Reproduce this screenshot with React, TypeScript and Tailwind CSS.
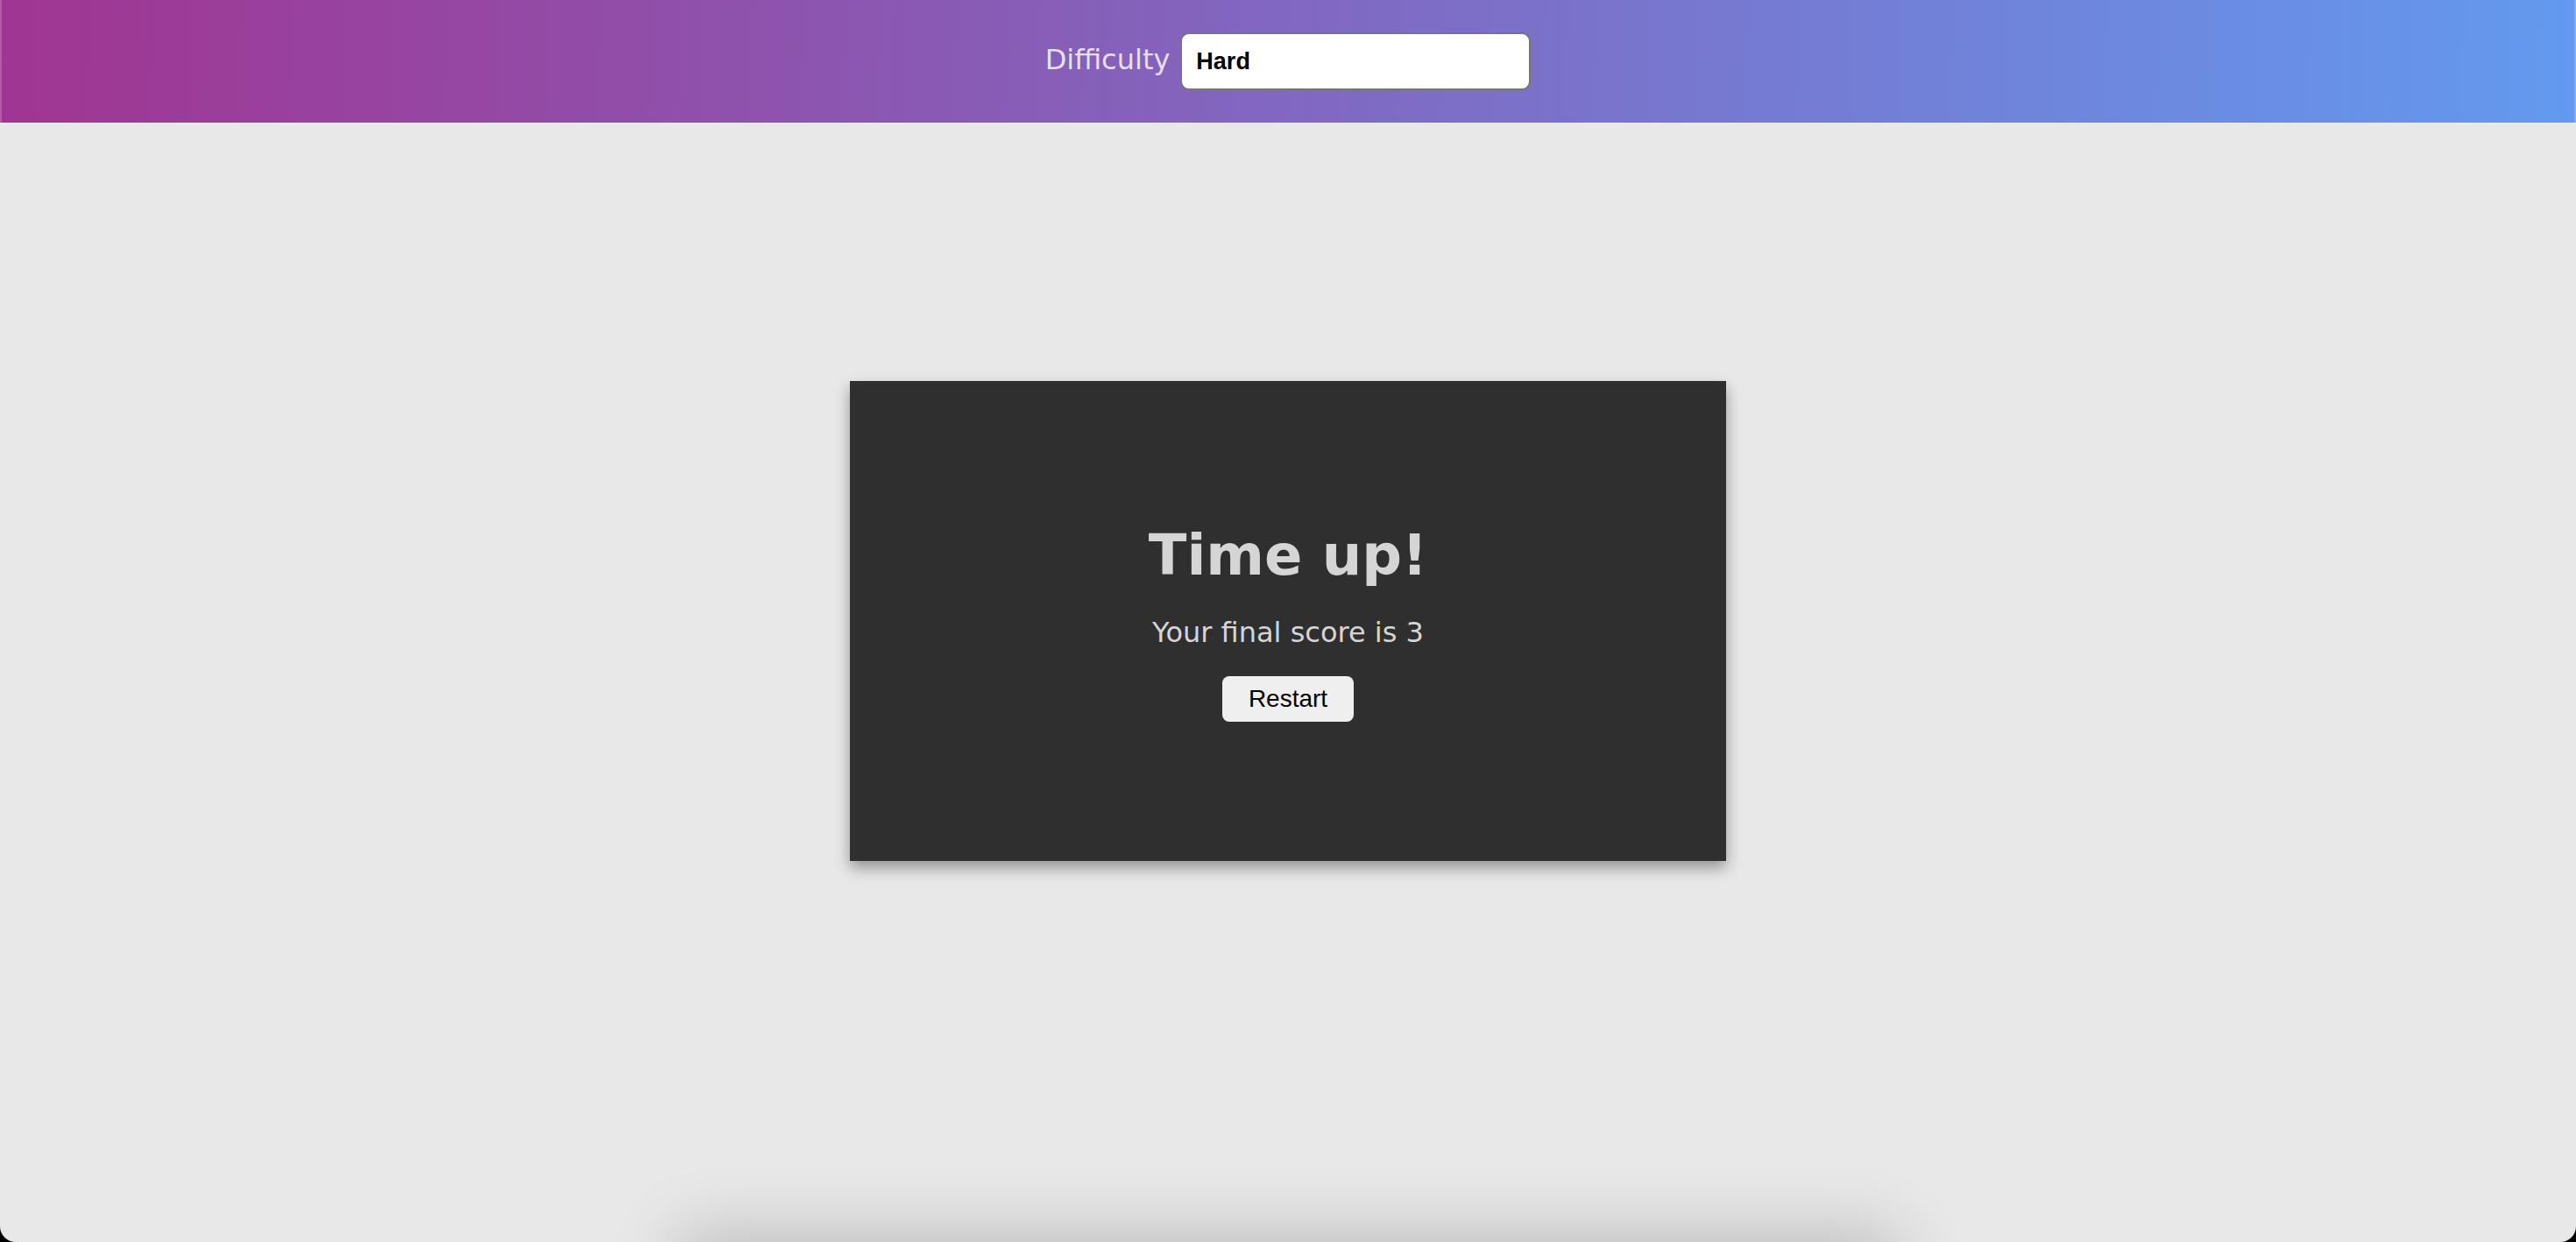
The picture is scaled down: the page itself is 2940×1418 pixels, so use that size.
export default function App() {
  return (
    <div className="min-h-screen bg-black font-['DejaVu_Sans','Verdana',sans-serif]">
      <div className="relative flex min-h-screen flex-col overflow-hidden rounded-b-[18px] bg-[#e8e8e8]">
        <header className="flex h-[140px] items-start justify-center gap-3 border-x-2 border-white/20 bg-linear-[92deg,#a03592,#629aef] bg-origin-border pt-[37px]">
          <label htmlFor="difficulty" className="pt-[9px] text-[32px] leading-[44px] text-[#e7def1]">
            Difficulty
          </label>
          <select
            id="difficulty"
            defaultValue="hard"
            className="h-[66px] w-[400px] appearance-none rounded-[10px] border-2 border-[#767676] bg-white px-4 font-['Liberation_Sans',Arial,sans-serif] text-[27px] font-bold text-black"
          >
            <option value="easy">Easy</option>
            <option value="medium">Medium</option>
            <option value="hard">Hard</option>
          </select>
        </header>
        <main className="flex flex-1 items-center justify-center pb-[140px]">
          <section className="flex h-[548px] w-full max-w-[1000px] flex-col items-center justify-center bg-[#2f2f2f] text-[#d5d5d5] shadow-[0_8px_16px_rgba(0,0,0,0.36)]">
            <h1 className="text-[64px] leading-[80px] font-bold">Time up!</h1>
            <p className="mt-7 text-[32px] leading-10">Your final score is 3</p>
            <button
              type="button"
              className="mt-[30px] h-[52px] w-[150px] rounded-lg bg-[#efefef] font-['Liberation_Sans',Arial,sans-serif] text-[28px] text-black"
            >
              Restart
            </button>
          </section>
        </main>
        <div className="absolute top-full left-1/2 h-20 w-[1376px] -translate-x-1/2 shadow-[0_0_80px_8px_rgba(0,0,0,0.2)]" />
      </div>
    </div>
  );
}
